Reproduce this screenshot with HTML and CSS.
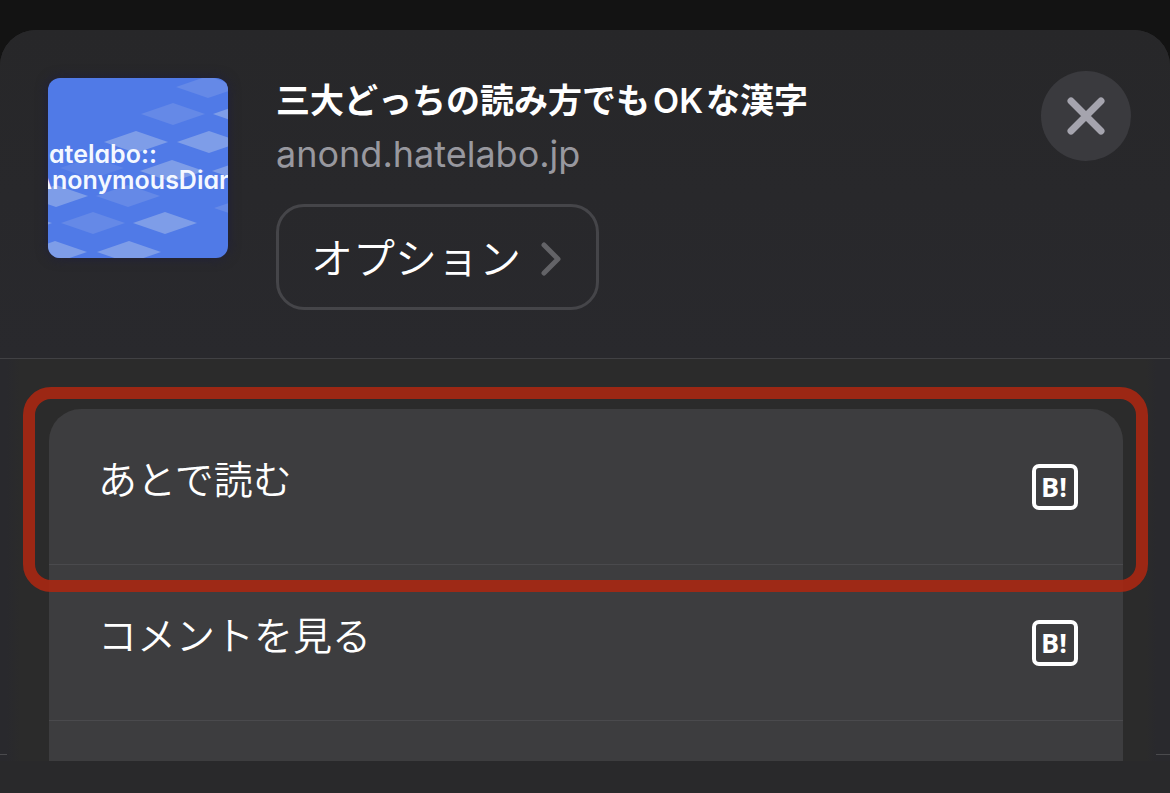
FILE: index.html
```html
<!DOCTYPE html>
<html lang="ja">
<head>
<meta charset="utf-8">
<meta name="viewport" content="width=device-width, initial-scale=1">
<title>共有</title>
<link rel="stylesheet" href="styles.css">
</head>
<body>
<main class="sheet">
  <header class="header">
    <svg class="thumb" viewBox="0 0 180 180" role="img" aria-label="Hatelabo AnonymousDiary">
      <defs><path id="d" d="M-32 0L0-11L32 0L0 11Z"/></defs>
      <rect width="180" height="180" fill="#507ae7"/>
      <g fill="#6589e7">
        <use href="#d" x="160" y="9"/><use href="#d" x="125" y="36"/>
        <use href="#d" x="44" y="90" opacity=".6"/><use href="#d" x="80" y="118"/>
        <use href="#d" x="198" y="130"/><use href="#d" x="45" y="145"/>
      </g>
      <g fill="#7e9de8">
        <use href="#d" x="197" y="36"/><use href="#d" x="88" y="64"/><use href="#d" x="161" y="64"/>
        <use href="#d" x="124" y="93"/><use href="#d" x="196" y="93"/><use href="#d" x="8" y="118"/>
        <use href="#d" x="117" y="145"/><use href="#d" x="-28" y="145"/>
        <use href="#d" x="7" y="174"/><use href="#d" x="81" y="174"/>
      </g>
      <g class="thumb-text">
        <text x="1" y="85">atelabo::</text>
        <text x="181" y="111" text-anchor="end">AnonymousDiar</text>
      </g>
    </svg>
    <div class="info">
      <h1 class="title">三大どっちの読み方でも<span class="latin">OK</span>な漢字</h1>
      <p class="domain">anond.hatelabo.jp</p>
      <button class="options" type="button">
        <span class="label">オプション</span>
        <svg width="20" height="34" viewBox="0 0 20 34" aria-hidden="true"><path d="M3 3L17 17L3 31" fill="none" stroke="#636367" stroke-width="5" stroke-linecap="round" stroke-linejoin="round"/></svg>
      </button>
    </div>
    <button class="close" type="button" aria-label="閉じる">
      <svg width="38" height="38" viewBox="0 0 38 38" aria-hidden="true"><path d="M4 4L34 34M34 4L4 34" stroke="#a5a4ae" stroke-width="7" stroke-linecap="round"/></svg>
    </button>
  </header>
  <section class="body">
    <ul class="actions">
      <li class="item marked">
        <button class="action" type="button">
          <span class="label">あとで読む</span>
          <svg class="bmark" viewBox="0 0 46 46" aria-hidden="true"><rect x="2" y="2" width="42" height="42" rx="5"/><text x="9" y="33">B!</text></svg>
        </button>
      </li>
      <li class="item">
        <button class="action" type="button">
          <span class="label">コメントを見る</span>
          <svg class="bmark" viewBox="0 0 46 46" aria-hidden="true"><rect x="2" y="2" width="42" height="42" rx="5"/><text x="9" y="33">B!</text></svg>
        </button>
      </li>
      <li class="item partial"></li>
    </ul>
  </section>
</main>
</body>
</html>
```
FILE: styles.css
```css
* { box-sizing: border-box; }
body {
  margin: 0;
  min-height: 100vh;
  padding-top: 30px;
  display: flex;
  flex-direction: column;
  background: #131313;
  color: #fff;
  font-family: Inter, "Noto Sans CJK JP", sans-serif;
}
button {
  border: 0;
  padding: 0;
  background: none;
  color: inherit;
  font: inherit;
  cursor: pointer;
}
.sheet {
  flex: 1;
  border-radius: 36px 36px 0 0;
  background: #29292b;
}
.header {
  display: flex;
  align-items: flex-start;
  padding: 48px 39px 48px 48px;
  border-bottom: 1px solid #414144;
  border-radius: 36px 36px 0 0;
  background: linear-gradient(#272729, #29292d);
}
.thumb {
  flex: none;
  width: 180px;
  height: 180px;
  border-radius: 12px;
  box-shadow: 0 0 12px #20203c;
}
.thumb-text {
  fill: #f4f8ff;
  font: 600 25px Inter, sans-serif;
  font-feature-settings: "cv11";
}
.info {
  flex: 1;
  min-width: 0;
  padding-left: 48px;
}
.title {
  margin: 0;
  font: 600 34px/46px Inter, "Noto Sans CJK JP", sans-serif;
}
.latin { margin: 0 3px; }
.domain {
  margin: 7px 0 27px;
  color: #98989f;
  font-size: 36px;
  line-height: 46px;
}
.options {
  display: flex;
  align-items: center;
  gap: 20px;
  height: 106px;
  padding: 3px 35px 0 32px;
  border: 3px solid #454549;
  border-radius: 28px;
  font-size: 42px;
  font-weight: 350;
}
.options .label { padding-bottom: 6px; }
.close {
  display: grid;
  place-items: center;
  flex: none;
  width: 90px;
  height: 90px;
  margin-top: -7px;
  border-radius: 50%;
  background: #3a3a3e;
}
.body {
  position: relative;
  padding: 50px 47px 0 49px;
  background: linear-gradient(90deg, #29292d 7px, #2b2b2b 20px, #2b2b2b calc(100% - 24px), #29292d calc(100% - 14px));
}
.body::before,
.body::after {
  content: "";
  position: absolute;
  bottom: 6px;
  height: 1px;
  background: #4a4a4d;
}
.body::before { left: 0; width: 7px; }
.body::after { right: 0; width: 14px; }
.actions {
  margin: 0;
  padding: 0;
  list-style: none;
  border-radius: 32px 32px 0 0;
  background: #3d3d3f;
}
.item {
  position: relative;
  border-bottom: 1px solid #4a4a4d;
}
.action {
  display: flex;
  align-items: center;
  justify-content: space-between;
  width: 100%;
  height: 155px;
  padding: 0 45px 0 49px;
  font-size: 39px;
  font-weight: 350;
}
.action .label { padding-bottom: 20px; }
.partial {
  height: 40px;
  border: 0;
}
.marked::after {
  content: "";
  position: absolute;
  z-index: 1;
  inset: -22px -25px -28px -26px;
  border: 12px solid rgba(172, 39, 17, 0.88);
  border-radius: 28px;
  pointer-events: none;
}
.bmark {
  width: 46px;
  height: 46px;
}
.bmark rect {
  fill: none;
  stroke: #fff;
  stroke-width: 4;
}
.bmark text {
  fill: #fff;
  font: 700 27px "Open Sans", sans-serif;
}
```
